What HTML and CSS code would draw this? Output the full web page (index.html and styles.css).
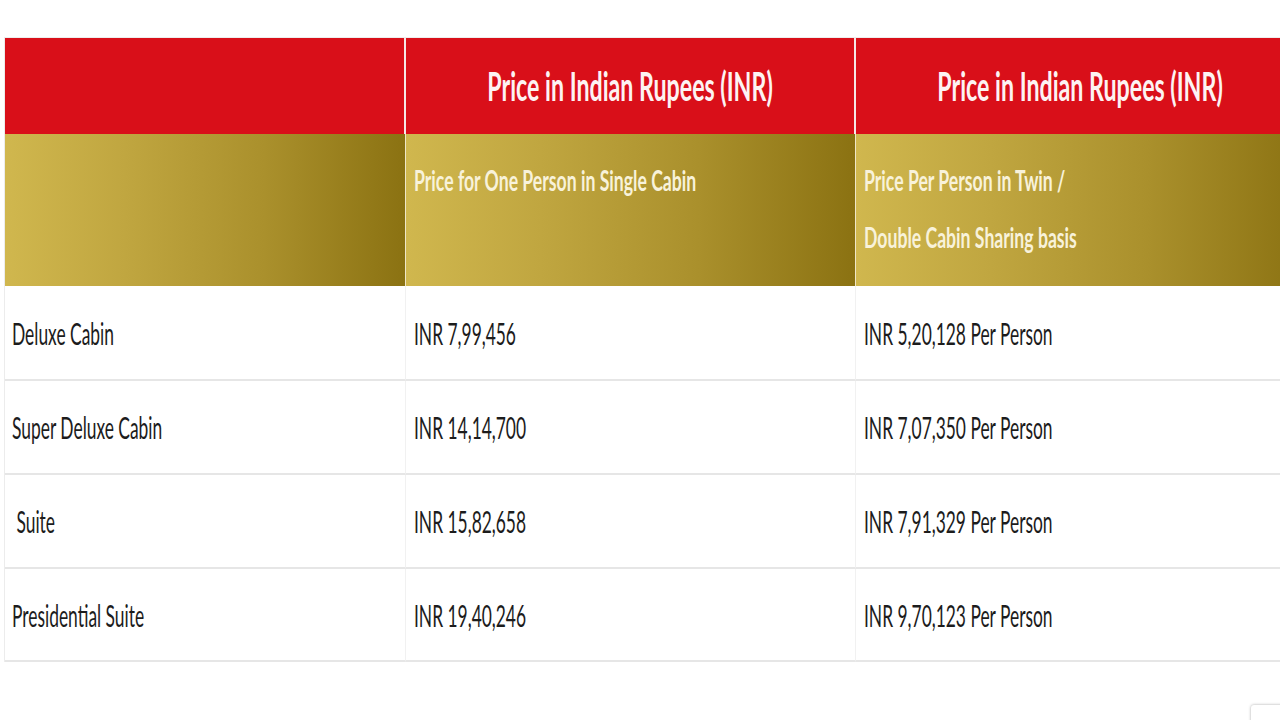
FILE: index.html
```html
<!DOCTYPE html>
<html lang="en">
<head>
<meta charset="utf-8">
<title>Cabin Prices</title>
<link rel="stylesheet" href="styles.css">
</head>
<body>
<div class="price-table">
  <div class="cell head"></div>
  <div class="cell head center"><span class="sx sx-c">Price in Indian Rupees (INR)</span></div>
  <div class="cell head center"><span class="sx sx-c">Price in Indian Rupees (INR)</span></div>

  <div class="cell sub"></div>
  <div class="cell sub"><div class="sub-lines"><span class="sx sx-sub">Price for One Person in Single Cabin</span></div></div>
  <div class="cell sub"><div class="sub-lines"><span class="sx sx-sub">Price Per Person in Twin /</span><span class="sx sx-sub">Double Cabin Sharing basis</span></div></div>

  <div class="cell body first"><span class="sx">Deluxe Cabin</span></div>
  <div class="cell body"><span class="sx">INR 7,99,456</span></div>
  <div class="cell body"><span class="sx">INR 5,20,128 Per Person</span></div>

  <div class="cell body first"><span class="sx">Super Deluxe Cabin</span></div>
  <div class="cell body"><span class="sx">INR 14,14,700</span></div>
  <div class="cell body"><span class="sx">INR 7,07,350 Per Person</span></div>

  <div class="cell body first"><span class="sx">&nbsp;Suite</span></div>
  <div class="cell body"><span class="sx">INR 15,82,658</span></div>
  <div class="cell body"><span class="sx">INR 7,91,329 Per Person</span></div>

  <div class="cell body first"><span class="sx">Presidential Suite</span></div>
  <div class="cell body"><span class="sx">INR 19,40,246</span></div>
  <div class="cell body"><span class="sx">INR 9,70,123 Per Person</span></div>
</div>
<div class="corner-widget"></div>
</body>
</html>
```

FILE: styles.css
```css
html, body {
  margin: 0;
  padding: 0;
  background: #ffffff;
  overflow: hidden;
  width: 1280px;
  height: 720px;
}

body {
  font-family: Lato, "Open Sans", "Liberation Sans", sans-serif;
  padding: 37px 0 0 4px;
  box-sizing: border-box;
  position: relative;
}

.price-table {
  display: grid;
  grid-template-columns: 401px 450px 450px;
  grid-template-rows: 96px 152px 95px 94px 94px 93px;
  width: 1301px;
  border-top: 1px solid #eeeeee;
  border-left: 1px solid #ececec;
  box-sizing: border-box;
}

.cell {
  box-sizing: border-box;
  display: flex;
  align-items: center;
  white-space: nowrap;
  min-width: 0;
}

.sx {
  display: inline-block;
  transform: scaleX(0.58);
  transform-origin: left center;
}

.sx-c {
  transform-origin: center center;
}

.sx-sub {
  transform: scaleX(0.63);
}

.head {
  background: #d90f19;
  color: #fdf3f3;
  font-weight: 700;
  font-size: 40px;
  line-height: 48px;
  border-right: 2px solid #f6e6e6;
}

.center {
  justify-content: center;
}

.sub {
  background: linear-gradient(to right, #d0b74e 0%, #c0a640 30%, #aa902c 65%, #8b7212 100%);
  color: #f8f2da;
  font-weight: 700;
  font-size: 28px;
  line-height: 57px;
  align-items: flex-start;
  padding: 18px 0 0 8px;
  border-right: 1px solid #efe6c8;
}

.sub-lines {
  display: flex;
  flex-direction: column;
  align-items: flex-start;
}

.body {
  font-size: 30px;
  line-height: 36px;
  color: #1c1c1c;
  padding-left: 8px;
  border-right: 1px solid #f1f1f1;
  border-bottom: 2px solid #e6e6e6;
}

.body.first {
  padding-left: 7px;
}

.corner-widget {
  position: absolute;
  left: 1251px;
  top: 705px;
  width: 60px;
  height: 40px;
  background: #ffffff;
  border-radius: 3px;
  box-shadow: 0 0 3px rgba(0, 0, 0, 0.35);
}
```
